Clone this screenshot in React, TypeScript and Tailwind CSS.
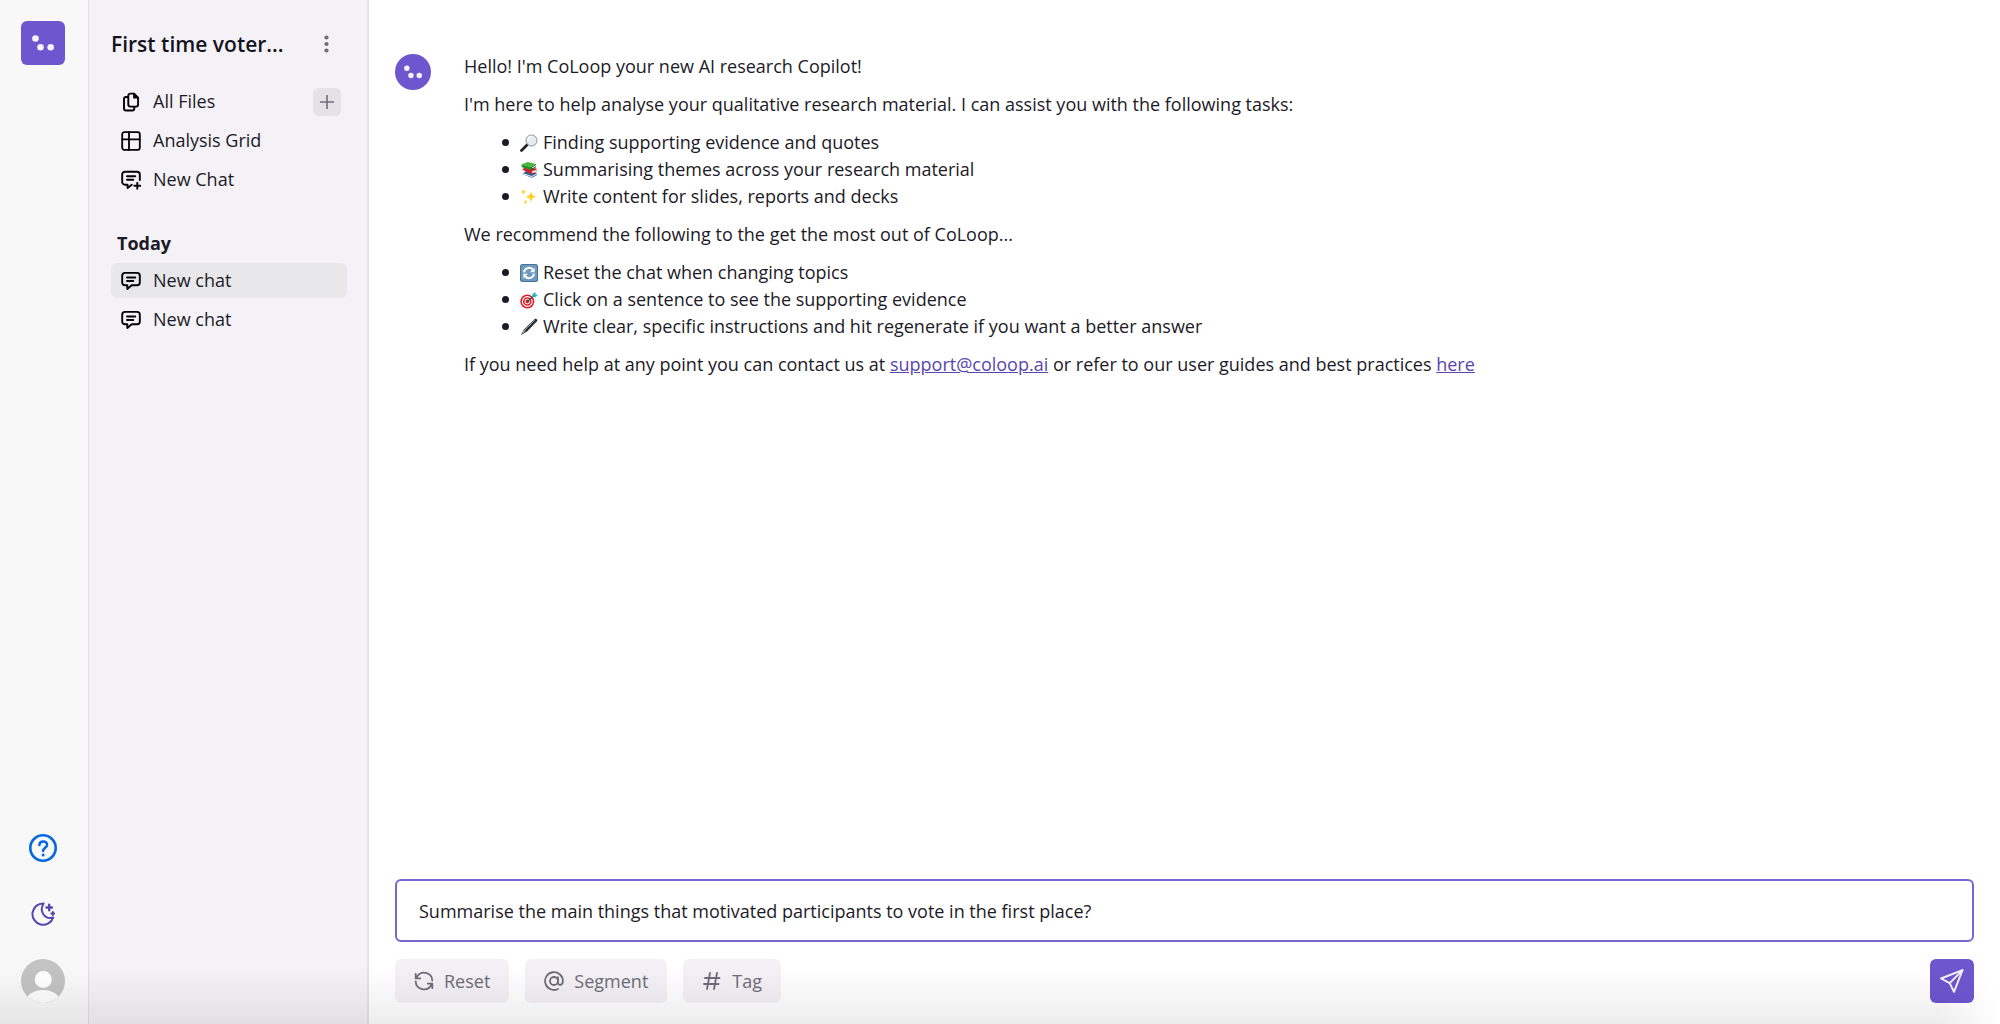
import { useState, type ReactNode } from 'react';

const stroke = {
    fill: 'none',
    stroke: 'currentColor',
    strokeLinecap: 'round' as const,
    strokeLinejoin: 'round' as const,
};

function LogoDots({ className }: { className: string }) {
    return (
        <svg viewBox="0 0 44 44" className={className} fill="#f6f3fd" aria-hidden="true">
            <circle cx="14.5" cy="17.5" r="3.3" />
            <circle cx="19.5" cy="26.3" r="3.3" />
            <circle cx="29.7" cy="26.3" r="3.3" />
        </svg>
    );
}

function FilesIcon() {
    return (
        <svg viewBox="0 0 20 20" className="size-5" strokeWidth="1.9" {...stroke} aria-hidden="true">
            <path d="M9.3 1.6h3.8l4 4v7a2 2 0 0 1-2 2H9.3a2 2 0 0 1-2-2v-9a2 2 0 0 1 2-2Z" />
            <path d="M12.8 1.8v4.2h4.2Z" fill="currentColor" strokeWidth="1.2" />
            <path d="M7 5H5a2 2 0 0 0-2 2v9.5a2 2 0 0 0 2 2h6.3a2 2 0 0 0 2-2v-1.5" />
        </svg>
    );
}

function GridIcon() {
    return (
        <svg viewBox="0 0 20 20" className="size-5" strokeWidth="1.8" {...stroke} aria-hidden="true">
            <rect x="1.2" y="1.2" width="17.6" height="17.6" rx="2" />
            <path d="M1.2 8.3h17.6M8 1.2v17.6" />
        </svg>
    );
}

function ChatIcon() {
    return (
        <svg viewBox="0 0 20 20" className="size-5" strokeWidth="1.9" {...stroke} aria-hidden="true">
            <path d="M4 1.9h12a2.8 2.8 0 0 1 2.8 2.8v6.8a2.8 2.8 0 0 1-2.8 2.8h-5.3L6.3 18v-3.7H4a2.8 2.8 0 0 1-2.8-2.8V4.7A2.8 2.8 0 0 1 4 1.9Z" />
            <path d="M6 6.5h8.3M6 10h6.3" />
        </svg>
    );
}

function NewChatIcon() {
    return (
        <svg viewBox="0 0 20 20" className="size-5" strokeWidth="1.9" {...stroke} aria-hidden="true">
            <path d="M10.8 14.8 6.6 18v-3.3H4a2.8 2.8 0 0 1-2.8-2.8V4.5A2.8 2.8 0 0 1 4 1.7h12a2.8 2.8 0 0 1 2.8 2.8V10" />
            <path d="M6 6.3h8.3M6 9.8h6.3M16.3 12.8v6M13.3 15.8h6" />
        </svg>
    );
}

function HelpIcon() {
    return (
        <svg viewBox="0 0 28 28" className="size-7" {...stroke} aria-hidden="true">
            <circle cx="14" cy="14" r="12.7" strokeWidth="2.6" />
            <path d="M10.4 10.9c0-4.6 7.7-4.6 7.7-.2 0 3-4 3.2-4 6.3" strokeWidth="2.5" />
            <circle cx="14.1" cy="21" r="1.5" fill="currentColor" stroke="none" />
        </svg>
    );
}

function MoonIcon() {
    return (
        <svg viewBox="0 0 24 24" className="size-6" strokeWidth="2" {...stroke} aria-hidden="true">
            <path d="M12.6 1.4C7.6 9.6 14 18 22.3 15.5A10.7 10.7 0 1 1 12.6 1.4Z" />
            <path d="M18.2 2.8v5.4M15.5 5.5h5.4" strokeWidth="2.4" />
            <path d="M21.8 10v3M20.3 11.5h3" />
        </svg>
    );
}

function Avatar() {
    return (
        <svg viewBox="0 0 44 44" className="size-11" aria-hidden="true">
            <defs>
                <clipPath id="avatar">
                    <circle cx="22" cy="22" r="22" />
                </clipPath>
            </defs>
            <g clipPath="url(#avatar)">
                <rect width="44" height="44" fill="#c3c3c3" />
                <circle cx="22.3" cy="20.5" r="8.5" fill="#fff" />
                <ellipse cx="22" cy="42.5" rx="17" ry="11.5" fill="#fdfdfd" />
            </g>
        </svg>
    );
}

function ResetIcon() {
    return (
        <svg viewBox="0 0 20 20" className="size-5" strokeWidth="1.8" {...stroke} aria-hidden="true">
            <path d="M18.3 9.5A8.2 8.2 0 0 0 3 5.8L1.9 7.3M1.7 2.8v4.6h4.6" />
            <path d="M1.7 10.5A8.2 8.2 0 0 0 17 14.2l1.1-1.5M18.3 17.2v-4.6h-4.6" />
        </svg>
    );
}

function SegmentIcon() {
    return (
        <svg viewBox="0 0 20 20" className="size-5" strokeWidth="1.8" {...stroke} aria-hidden="true">
            <circle cx="10" cy="10" r="4" />
            <path d="M14 6.2v5.3c0 3.4 4.9 3.2 4.9-1.5A8.9 8.9 0 1 0 14 18" />
        </svg>
    );
}

function TagIcon() {
    return (
        <svg viewBox="0 0 20 20" className="size-5" strokeWidth="1.8" {...stroke} aria-hidden="true">
            <path d="M8 2 5 18M15 2l-3 16M3 7h14.5M2 13h14.5" />
        </svg>
    );
}

function SendIcon() {
    return (
        <svg viewBox="0 0 24 24" className="size-6" strokeWidth="1.9" {...stroke} aria-hidden="true">
            <path d="M22.5 1.2 1 9.5l8.7 4.7 4.3 8.7Z" />
            <path d="M22.5 1.2 9.7 14.2" />
        </svg>
    );
}

function MagnifierPicture() {
    return (
        <>
            <path d="M1.5 16.5 7 11" stroke="#222428" strokeWidth="2.8" strokeLinecap="round" />
            <circle cx="11.5" cy="6.5" r="5.5" fill="#e4ecf1" stroke="#8b9197" />
            <path d="M8 6a3.8 3.8 0 0 1 4-3.4" stroke="#fff" strokeWidth="1.5" fill="none" />
        </>
    );
}

function BooksPicture() {
    return (
        <>
            <path d="m2.5 13 9 3.8 5-2.3v-2.3L6 10Z" fill="#2d5d91" />
            <path d="m3.5 13.5 8 2.6 4.5-2v-1l-4.5 1.8-8-2.6Z" fill="#f2f2f2" />
            <path d="m2 8.5 9.5 4.6 5-2V7.5L6 6Z" fill="#d3222b" />
            <path d="m12 10.3 4.5-1.6v1.7L12 12.2Z" fill="#f5e9e6" />
            <path d="m1.5 3.5 6-2.5 8.5 2-5 3Z" fill="#48b83a" />
            <path d="M1.5 3.5 11 6v3L2 6.3Z" fill="#238c2d" />
            <path d="m11 6 5-3v1l-4 2.4v1L16 5v1.3L11 9Z" fill="#1f702a" />
        </>
    );
}

function SparklesPicture() {
    return (
        <g fill="#ffce22">
            <path d="M11 2.5c.5 4.2 1.8 5.6 5.8 6.2-4 .6-5.3 2-5.8 6.2-.5-4.2-1.8-5.6-5.8-6.2 4-.6 5.3-2 5.8-6.2Z" />
            <path d="M3.5 1c.3 2 .9 2.6 2.7 2.9-1.8.3-2.4.9-2.7 2.9-.3-2-.9-2.6-2.7-2.9C2.6 3.6 3.2 3 3.5 1ZM5.5 11.5c.3 1.8.8 2.3 2.4 2.6-1.6.3-2.1.8-2.4 2.6-.3-1.8-.8-2.3-2.4-2.6 1.6-.3 2.1-.8 2.4-2.6Z" />
        </g>
    );
}

function RefreshPicture() {
    return (
        <>
            <rect width="18" height="18" rx="2.5" fill="#4c7096" />
            <rect x="1" y="1" width="16" height="16" rx="2" fill="#6e9abf" />
            <path d="M4 8.3a5 5 0 0 1 8.8-2.6M14 9.7a5 5 0 0 1-8.8 2.6" fill="none" stroke="#fff" strokeWidth="2" />
            <path d="M14.6 3.5v4.7H10ZM3.4 14.5V9.8H8Z" fill="#fff" />
        </>
    );
}

function TargetPicture() {
    return (
        <>
            <circle cx="7.3" cy="10.5" r="7" fill="#d81f2a" />
            <circle cx="7.3" cy="10.5" r="4.9" fill="none" stroke="#fff" strokeWidth="1.1" />
            <circle cx="7.3" cy="10.5" r="2.4" fill="none" stroke="#fff" />
            <path d="m7.3 10.5 7-6" stroke="#3a4048" strokeWidth="1.1" />
            <path d="m12 6 .5-3L15.5 1v2.4L18 3.8 15.5 6Z" fill="#25b5c4" />
        </>
    );
}

function PenPicture() {
    return (
        <>
            <path d="M.8 17.2 4 11.5 14.5 1.3c1.5-1.3 3.6.5 2.5 2L7 13.5Z" fill="#25282c" />
            <path d="M5 11.8 14.8 2.3" stroke="#9aa3aa" />
            <path d="M.8 17.2 4 11.5l2 1.5Z" fill="#8c9299" />
        </>
    );
}

function ListItem({ picture, children }: { picture: ReactNode; children: ReactNode }) {
    return (
        <li className="flex items-center before:mr-[11px] before:size-[7px] before:shrink-0 before:rounded-full before:bg-current">
            <svg viewBox="0 0 18 18" className="mr-[5px] size-[18px] shrink-0" aria-hidden="true">
                {picture}
            </svg>
            <span>{children}</span>
        </li>
    );
}

function NavItem({ icon, label, active = false }: { icon: ReactNode; label: string; active?: boolean }) {
    return (
        <button
            className={
                active
                    ? 'flex h-[35px] w-full items-center gap-3 rounded-md bg-[#e8e8ea] px-[10px] text-left'
                    : 'flex h-[35px] w-full items-center gap-3 rounded-md px-[10px] text-left'
            }
        >
            <span className="text-black">{icon}</span>
            {label}
        </button>
    );
}

function ToolButton({ icon, label }: { icon: ReactNode; label: string }) {
    return (
        <button className="flex h-11 items-center gap-[10px] rounded-md bg-[#f3f1f5] px-[19px] text-[#6f6d78]">
            {icon}
            {label}
        </button>
    );
}

export default function App() {
    const [prompt, setPrompt] = useState(
        'Summarise the main things that motivated participants to vote in the first place?'
    );

    return (
        <div className="relative flex h-screen bg-white font-['Open_Sans',sans-serif] text-[18px] leading-[27px] text-[#1c1a27]">
            <aside className="flex w-[89px] shrink-0 flex-col items-start border-r border-[#dfdee1] bg-[#f8f8f8] px-[21px] py-[21px]">
                <button aria-label="Home" className="rounded-md bg-[#6e56cf]">
                    <LogoDots className="size-11" />
                </button>
                <div className="mt-auto flex flex-col items-center">
                    <button aria-label="Help" className="mb-10 text-[#0668e1]">
                        <HelpIcon />
                    </button>
                    <button aria-label="Dark mode" className="mb-[33px] text-[#5746af]">
                        <MoonIcon />
                    </button>
                    <button aria-label="Account">
                        <Avatar />
                    </button>
                </div>
            </aside>

            <nav className="w-[280px] shrink-0 border-r-2 border-[#e3e2e6] bg-[#f4f2f6] pt-7 pr-5 pl-[22px]">
                <div className="mb-6 flex h-8 items-center justify-between">
                    <h1 className="text-[21px] font-semibold text-[#15131f]">First time voter...</h1>
                    <button aria-label="Project options" className="mr-[18px] text-[#6f6d78]">
                        <svg viewBox="0 0 5 18" className="h-[18px] w-[5px]" fill="currentColor" aria-hidden="true">
                            <circle cx="2.5" cy="2.5" r="2.1" />
                            <circle cx="2.5" cy="9" r="2.1" />
                            <circle cx="2.5" cy="15.5" r="2.1" />
                        </svg>
                    </button>
                </div>
                <div className="flex flex-col gap-1">
                    <div className="flex items-center pr-[6px]">
                        <NavItem icon={<FilesIcon />} label="All Files" />
                        <button
                            aria-label="Add files"
                            className="flex size-7 shrink-0 items-center justify-center rounded-md bg-[#e4e2e6] text-[#6f6d78]"
                        >
                            <svg viewBox="0 0 14 14" className="size-[14px]" strokeWidth="1.6" {...stroke} aria-hidden="true">
                                <path d="M7 .5v13M.5 7h13" />
                            </svg>
                        </button>
                    </div>
                    <NavItem icon={<GridIcon />} label="Analysis Grid" />
                    <NavItem icon={<NewChatIcon />} label="New Chat" />
                </div>
                <h2 className="mt-[33px] mb-[6px] px-[6px] font-bold">Today</h2>
                <div className="flex flex-col gap-1">
                    <NavItem icon={<ChatIcon />} label="New chat" active />
                    <NavItem icon={<ChatIcon />} label="New chat" />
                </div>
            </nav>

            <main className="flex min-w-0 flex-1 flex-col px-[26px] pb-[21px]">
                <section className="flex flex-1 items-start gap-[33px] pt-[53px]">
                    <span className="mt-px rounded-full bg-[#6e56cf]">
                        <LogoDots className="size-9" />
                    </span>
                    <div className="flex flex-col gap-[11px]">
                        <p>Hello! I'm CoLoop your new AI research Copilot!</p>
                        <p>I'm here to help analyse your qualitative research material. I can assist you with the following tasks:</p>
                        <ul className="pl-[38px]">
                            <ListItem picture={<MagnifierPicture />}>Finding supporting evidence and quotes</ListItem>
                            <ListItem picture={<BooksPicture />}>Summarising themes across your research material</ListItem>
                            <ListItem picture={<SparklesPicture />}>Write content for slides, reports and decks</ListItem>
                        </ul>
                        <p>We recommend the following to the get the most out of CoLoop...</p>
                        <ul className="pl-[38px]">
                            <ListItem picture={<RefreshPicture />}>Reset the chat when changing topics</ListItem>
                            <ListItem picture={<TargetPicture />}>Click on a sentence to see the supporting evidence</ListItem>
                            <ListItem picture={<PenPicture />}>
                                Write clear, specific instructions and hit regenerate if you want a better answer
                            </ListItem>
                        </ul>
                        <p>
                            If you need help at any point you can contact us at{' '}
                            <a href="mailto:support@coloop.ai" className="text-[#5746af] underline">support@coloop.ai</a>{' '}
                            or refer to our user guides and best practices{' '}
                            <a href="#guides" className="text-[#5746af] underline">here</a>
                        </p>
                    </div>
                </section>

                <form className="flex flex-col gap-[17px]" onSubmit={(e) => e.preventDefault()}>
                    <input
                        type="text"
                        aria-label="Message"
                        value={prompt}
                        onChange={(e) => setPrompt(e.target.value)}
                        className="h-[63px] w-full rounded-md border-2 border-[#7a64d2] bg-white px-[22px] outline-none"
                    />
                    <div className="flex items-center gap-4">
                        <ToolButton icon={<ResetIcon />} label="Reset" />
                        <ToolButton icon={<SegmentIcon />} label="Segment" />
                        <ToolButton icon={<TagIcon />} label="Tag" />
                        <button
                            aria-label="Send"
                            className="ml-auto flex size-11 items-center justify-center rounded-md bg-[#6e56cf] text-[#f6f3fd]"
                        >
                            <SendIcon />
                        </button>
                    </div>
                </form>
            </main>

            <div className="pointer-events-none absolute inset-x-0 bottom-0 h-14 bg-linear-to-b from-transparent to-black/7 mask-r-from-97%" />
        </div>
    );
}
